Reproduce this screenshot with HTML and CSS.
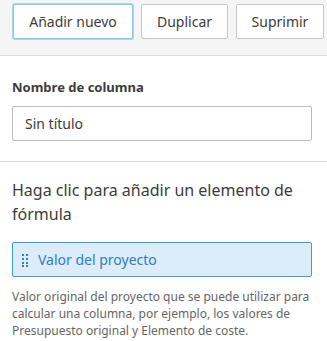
FILE: index.html
```html
<!DOCTYPE html>
<html lang="es">
<head>
<meta charset="UTF-8">
<meta name="viewport" content="width=device-width, initial-scale=1.0">
<title>Columna</title>
<link rel="stylesheet" href="styles.css">
</head>
<body>
<div class="toolbar">
    <button class="btn btn-add btn-focus">Añadir nuevo</button>
    <button class="btn btn-dup">Duplicar</button>
    <button class="btn btn-del">Suprimir</button>
</div>

<div class="section">
    <label class="field-label" for="colname">Nombre de columna</label>
    <input type="text" id="colname" class="field-input" value="Sin título">
</div>

<div class="section formula">
    <h3 class="formula-title">Haga clic para añadir un elemento de fórmula</h3>
    <div class="formula-item">
        <svg class="grip" width="8" height="14" viewBox="0 0 8 14">
            <rect x="1" y="1" width="2" height="2"/>
            <rect x="5" y="1" width="2" height="2"/>
            <rect x="1" y="5" width="2" height="2"/>
            <rect x="5" y="5" width="2" height="2"/>
            <rect x="1" y="9" width="2" height="2"/>
            <rect x="5" y="9" width="2" height="2"/>
            <rect x="1" y="12" width="2" height="2"/>
            <rect x="5" y="12" width="2" height="2"/>
        </svg>
        <span>Valor del proyecto</span>
    </div>
    <p class="formula-desc">Valor original del proyecto que se puede utilizar para calcular una columna, por ejemplo, los valores de Presupuesto original y Elemento de coste.</p>
</div>
</body>
</html>
```

FILE: styles.css
```css
body {
    margin: 0;
    padding: 0;
    font-family: "Noto Sans", Arial, sans-serif;
    color: #3c3c3c;
    background-color: #fff;
}

.toolbar {
    display: flex;
    gap: 8px;
    padding: 4px 0 0 13px;
    height: 56px;
    box-sizing: border-box;
    background-color: #f5f5f5;
    border-bottom: 1px solid #dcdcdc;
}

.btn {
    flex: none;
    height: 35px;
    padding: 0;
    white-space: nowrap;
    font-family: inherit;
    font-size: 14px;
    color: #3c3c3c;
    background-color: #fff;
    border: 1px solid #c8c8c8;
    border-radius: 2px;
}

.btn-add {
    width: 120px;
}

.btn-dup {
    width: 87px;
}

.btn-del {
    width: 88px;
}

.btn-focus {
    border-color: #8ec6e6;
    box-shadow: 0 0 0 1px #a9d6f0;
}

.section {
    padding: 0 12px 0 12px;
    border-bottom: 1px solid #dcdcdc;
}

.field-label {
    display: block;
    padding-top: 22px;
    font-size: 13px;
    font-weight: bold;
    line-height: 18px;
}

.field-input {
    display: block;
    width: 300px;
    height: 35px;
    margin: 10px 0 20px;
    padding: 0 12px;
    box-sizing: border-box;
    font-family: inherit;
    font-size: 14px;
    color: #3c3c3c;
    border: 1px solid #bdbdbd;
    border-radius: 2px;
}

.formula {
    border-bottom: none;
}

.formula-title {
    margin: 16px 0 0;
    font-size: 16px;
    font-weight: normal;
    line-height: 24px;
}

.formula-item {
    display: flex;
    align-items: center;
    gap: 9px;
    width: 300px;
    height: 35px;
    margin-top: 16px;
    padding: 0 8px;
    box-sizing: border-box;
    font-size: 14px;
    color: #2f7fc1;
    background-color: #dcedf9;
    border: 1px solid #3c9bdc;
    border-radius: 2px;
}

.grip {
    fill: #2f7fc1;
}

.formula-desc {
    margin: 11px 0 0;
    font-size: 12px;
    line-height: 17px;
    color: #666;
}
```
